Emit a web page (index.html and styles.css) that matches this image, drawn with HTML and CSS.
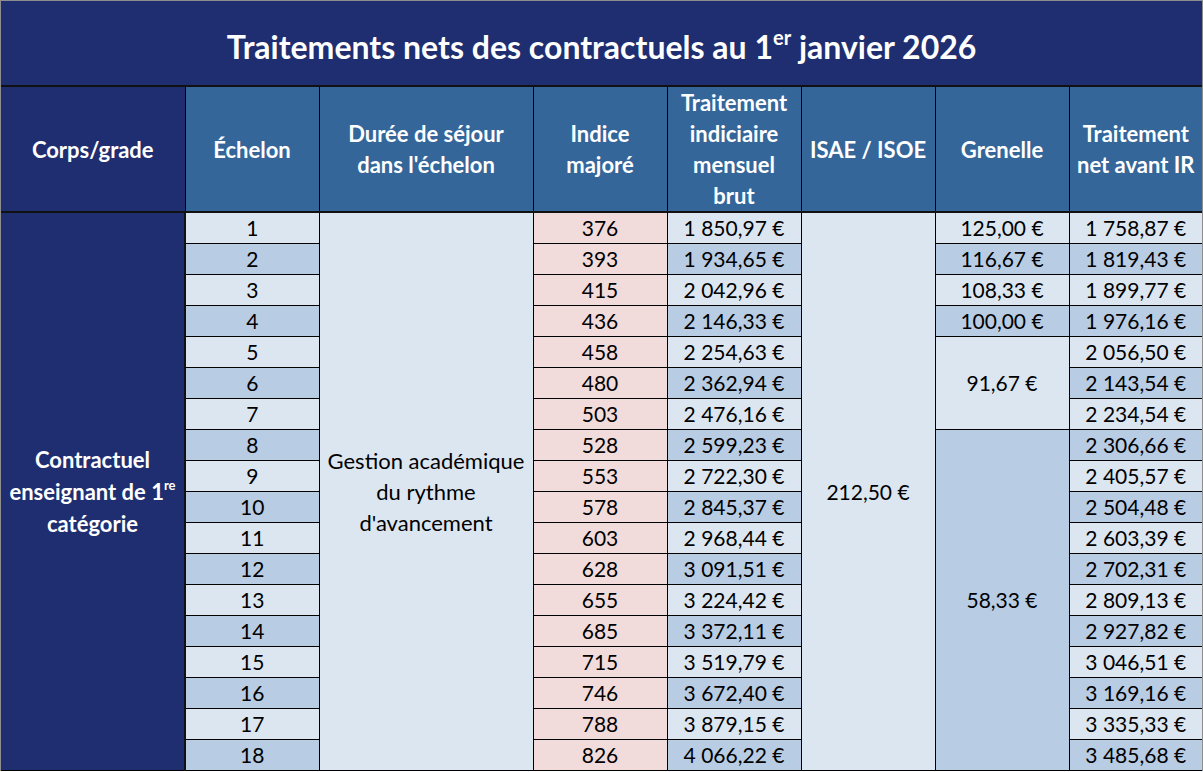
FILE: index.html
```html
<!DOCTYPE html>
<html lang="fr">
<head>
<meta charset="utf-8">
<title>Traitements nets des contractuels</title>
<link rel="stylesheet" href="styles.css">
</head>
<body>
<div class="sheet">
  <div class="title">Traitements nets des contractuels au 1<sup>er</sup> janvier 2026</div>
  <table class="grid">
    <colgroup>
      <col class="c-corps"><col class="c-ech"><col class="c-duree"><col class="c-ind"><col class="c-trait"><col class="c-isae"><col class="c-gren"><col class="c-net">
    </colgroup>
    <thead>
      <tr class="head">
        <th class="navy">Corps/grade</th>
        <th>Échelon</th>
        <th>Durée de séjour<br>dans l'échelon</th>
        <th>Indice<br>majoré</th>
        <th>Traitement<br>indiciaire<br>mensuel<br>brut</th>
        <th>ISAE / ISOE</th>
        <th>Grenelle</th>
        <th>Traitement<br>net avant IR</th>
      </tr>
    </thead>
    <tbody>
      <tr>
        <td class="navy corps" rowspan="18">Contractuel<br>enseignant de 1<sup>re</sup><br>catégorie</td>
        <td class="light">1</td>
        <td class="light merged" rowspan="18">Gestion académique<br>du rythme<br>d'avancement</td>
        <td class="pink">376</td>
        <td class="light">1 850,97 €</td>
        <td class="light merged" rowspan="18">212,50 €</td>
        <td class="light">125,00 €</td>
        <td class="light">1 758,87 €</td>
      </tr>
      <tr><td class="dark">2</td><td class="pink">393</td><td class="dark">1 934,65 €</td><td class="dark">116,67 €</td><td class="dark">1 819,43 €</td></tr>
      <tr><td class="light">3</td><td class="pink">415</td><td class="light">2 042,96 €</td><td class="light">108,33 €</td><td class="light">1 899,77 €</td></tr>
      <tr><td class="dark">4</td><td class="pink">436</td><td class="dark">2 146,33 €</td><td class="dark">100,00 €</td><td class="dark">1 976,16 €</td></tr>
      <tr><td class="light">5</td><td class="pink">458</td><td class="light">2 254,63 €</td><td class="light" rowspan="3">91,67 €</td><td class="light">2 056,50 €</td></tr>
      <tr><td class="dark">6</td><td class="pink">480</td><td class="dark">2 362,94 €</td><td class="dark">2 143,54 €</td></tr>
      <tr><td class="light">7</td><td class="pink">503</td><td class="light">2 476,16 €</td><td class="light">2 234,54 €</td></tr>
      <tr><td class="dark">8</td><td class="pink">528</td><td class="dark">2 599,23 €</td><td class="dark" rowspan="11">58,33 €</td><td class="dark">2 306,66 €</td></tr>
      <tr><td class="light">9</td><td class="pink">553</td><td class="light">2 722,30 €</td><td class="light">2 405,57 €</td></tr>
      <tr><td class="dark">10</td><td class="pink">578</td><td class="dark">2 845,37 €</td><td class="dark">2 504,48 €</td></tr>
      <tr><td class="light">11</td><td class="pink">603</td><td class="light">2 968,44 €</td><td class="light">2 603,39 €</td></tr>
      <tr><td class="dark">12</td><td class="pink">628</td><td class="dark">3 091,51 €</td><td class="dark">2 702,31 €</td></tr>
      <tr><td class="light">13</td><td class="pink">655</td><td class="light">3 224,42 €</td><td class="light">2 809,13 €</td></tr>
      <tr><td class="dark">14</td><td class="pink">685</td><td class="dark">3 372,11 €</td><td class="dark">2 927,82 €</td></tr>
      <tr><td class="light">15</td><td class="pink">715</td><td class="light">3 519,79 €</td><td class="light">3 046,51 €</td></tr>
      <tr><td class="dark">16</td><td class="pink">746</td><td class="dark">3 672,40 €</td><td class="dark">3 169,16 €</td></tr>
      <tr><td class="light">17</td><td class="pink">788</td><td class="light">3 879,15 €</td><td class="light">3 335,33 €</td></tr>
      <tr><td class="dark">18</td><td class="pink">826</td><td class="dark">4 066,22 €</td><td class="dark">3 485,68 €</td></tr>
    </tbody>
  </table>
</div>
</body>
</html>
```
FILE: styles.css
```css
html, body {
  margin: 0;
  padding: 0;
  background: #ffffff;
}
body {
  font-family: Lato, "Liberation Sans", sans-serif;
  color: #000;
}
.sheet {
  width: 1201px;
  border-top: 1px solid #8e8e8e;
  border-left: 1px solid #8e8e8e;
  border-right: 1px solid #8e8e8e;
}
.title {
  background: #1f2e70;
  color: #fff;
  font-weight: 700;
  font-size: 32px;
  height: 84px;
  line-height: 92px;
  text-align: center;
}
.title sup {
  font-size: 20px;
  line-height: 0;
  vertical-align: 0;
  position: relative;
  top: -14px;
}
.grid {
  width: 1201px;
  border-collapse: collapse;
  table-layout: fixed;
}
.c-corps { width: 184px; }
.c-ech { width: 134px; }
.c-duree { width: 214px; }
.c-ind { width: 134px; }
.c-trait { width: 134px; }
.c-isae { width: 134px; }
.c-gren { width: 134px; }
.c-net { width: 133px; }
.grid th, .grid td {
  padding: 0;
  text-align: center;
  white-space: nowrap;
  border: 1px solid #000;
}
.head th {
  background: #34669a;
  color: #fff;
  font-weight: 700;
  font-size: 22px;
  line-height: 31px;
  height: 123px;
  border-top: 2px solid #111;
  border-bottom: 2px solid #111;
}
.grid thead th:first-child, .grid td.corps { border-left: 0; }
.grid thead th:last-child, .grid tbody td:last-child { border-right: 0; }
.grid th.navy, .grid td.navy {
  background: #1f2e70;
  color: #fff;
}
.grid td {
  font-size: 21px;
  height: 30px;
  line-height: 30px;
}
.grid td.corps {
  font-size: 22px;
  font-weight: 700;
  line-height: 32px;
  border-right: 2px solid #111;
}
.grid td.merged {
  line-height: 31px;
}
.grid td.merged:nth-child(3) {
  font-size: 22px;
}
.grid sup {
  font-size: 13px;
  line-height: 0;
  vertical-align: 0;
  position: relative;
  top: -10px;
}
.light { background: #dce6f1; }
.dark { background: #b8cce4; }
.pink { background: #f2dcdb; }
```
